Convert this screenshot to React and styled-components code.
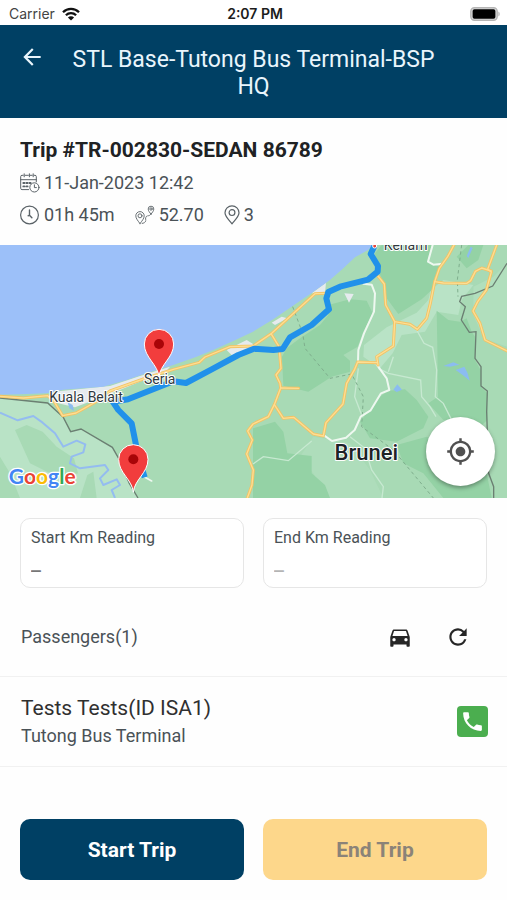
import React from 'react';
import styled, { createGlobalStyle, css } from 'styled-components';
import {
  MdArrowBack,
  MdDirectionsCar,
  MdMyLocation,
  MdPhone,
  MdRefresh,
} from 'react-icons/md';

const GlobalStyle = createGlobalStyle`
  * {
    box-sizing: border-box;
  }

  body {
    margin: 0;
    background: #fefefe;
    color: #4a5257;
    font-family: Roboto, 'Liberation Sans', sans-serif;
    font-size: 18px;
  }

  h1, h2, h3, p, ul {
    margin: 0;
    padding: 0;
    font-weight: 400;
  }

  button, input {
    font-family: inherit;
  }
`;

const Screen = styled.div`
  min-height: 100vh;
  display: flex;
  flex-direction: column;
`;

const StatusBar = styled.div`
  height: 25px;
  padding: 2px 6px 0 9px;
  display: grid;
  grid-template-columns: 1fr auto 1fr;
  align-items: center;
  background: #fff;
  color: #1c1c1c;
  font-family: Inter, sans-serif;
  font-size: 14px;
  line-height: 20px;

  svg {
    display: block;
  }
`;

const Carrier = styled.div`
  display: flex;
  align-items: center;
  gap: 7px;
  color: #444;
`;

const Clock = styled.div`
  font-weight: 600;
`;

const Battery = styled.div`
  justify-self: end;
`;

const Header = styled.header`
  display: grid;
  grid-template-columns: 36px 1fr 36px;
  padding: 21px 18px 18px;
  background: #004064;
  color: #e9f5fc;
`;

const Title = styled.h1`
  font-size: 23px;
  line-height: 27px;
  text-align: center;
`;

const IconButton = styled.button`
  display: flex;
  align-items: center;
  justify-content: center;
  width: 28px;
  height: 28px;
  padding: 0;
  border: 0;
  background: none;
  color: ${props => props.color || 'inherit'};
  font-size: 26px;
  cursor: pointer;
`;

const BackButton = styled(IconButton)`
  height: 22px;
`;

const TripInfo = styled.section`
  display: flex;
  flex-direction: column;
  gap: 8px;
  padding: 20px 20px 18px;
`;

const TripTitle = styled.h2`
  color: #202224;
  font-size: 21px;
  font-weight: 700;
  line-height: 25px;
`;

const TripMeta = styled.div`
  display: flex;
  gap: 20px;
`;

const MetaItem = styled.span`
  display: flex;
  align-items: center;
  gap: 4px;
  line-height: 24px;

  svg {
    fill: none;
    stroke: #5a6267;
    stroke-linecap: round;
    stroke-linejoin: round;
  }
`;

const MapFrame = styled.section`
  position: relative;
  aspect-ratio: 507 / 253;
  overflow: hidden;
`;

const MapCanvas = styled.svg`
  display: block;
  width: 100%;
  height: 100%;
`;

const LocateButton = styled.button`
  position: absolute;
  right: 12px;
  bottom: 12px;
  display: flex;
  align-items: center;
  justify-content: center;
  width: 69px;
  height: 69px;
  padding: 0;
  border: 0;
  border-radius: 50%;
  background: #fff;
  box-shadow: 0 2px 4px rgba(0, 0, 0, 0.35);
  color: #505050;
  font-size: 29px;
  cursor: pointer;
`;

const pair = css`
  display: grid;
  grid-template-columns: 1fr 1fr;
  gap: 19px;
`;

const Readings = styled.section`
  ${pair};
  padding: 20px 20px 0;
`;

const ReadingCard = styled.label`
  display: flex;
  flex-direction: column;
  justify-content: space-between;
  height: 70px;
  padding: 9px 10px 12px;
  border: 1px solid #e6e6e6;
  border-radius: 10px;
  background: #fff;
  font-size: 16px;
  line-height: 20px;
`;

const ReadingInput = styled.input`
  width: 100%;
  height: 24px;
  padding: 0;
  border: 0;
  outline: 0;
  background: none;
  color: #4a5257;
  font-size: 22px;
  line-height: 24px;

  &::placeholder {
    color: ${props => (props.disabled ? '#b4b4b4' : '#777')};
    opacity: 1;
  }
`;

const ListHeader = styled.div`
  display: flex;
  align-items: center;
  justify-content: space-between;
  margin-top: 10px;
  padding: 25px 35px 25px 21px;
  border-bottom: 1px solid #f1f1f1;
`;

const ListTitle = styled.h2`
  font-size: 18px;
  line-height: 28px;
`;

const ListActions = styled.div`
  display: flex;
  gap: 30px;
`;

const PassengerList = styled.ul`
  list-style: none;
`;

const PassengerRow = styled.li`
  display: flex;
  align-items: center;
  justify-content: space-between;
  min-height: 90px;
  padding: 0 19px 0 21px;
  border-bottom: 1px solid #f1f1f1;
`;

const PassengerName = styled.h3`
  color: #303030;
  font-size: 21px;
  line-height: 28px;
`;

const PassengerStop = styled.p`
  font-size: 18px;
  line-height: 28px;
`;

const CallLink = styled.a`
  display: flex;
  align-items: center;
  justify-content: center;
  width: 31px;
  height: 31px;
  border-radius: 4px;
  background: #4bae4f;
  color: #fff;
  font-size: 25px;
`;

const Footer = styled.footer`
  ${pair};
  margin-top: auto;
  padding: 20px;
`;

const TripButton = styled.button`
  height: 61px;
  padding: 0;
  border: 0;
  border-radius: 10px;
  background: ${props => (props.disabled ? '#fdd78b' : '#004064')};
  color: ${props => (props.disabled ? '#8b8378' : '#fff')};
  font-size: 21px;
  font-weight: 700;
`;

const WifiIcon = () => (
  <svg width="18" height="14" viewBox="0 0 18 14" fill="none" stroke="#111" strokeWidth="2.3">
    <path d="M1 5.2a11.4 11.4 0 0 1 16 0" />
    <path d="M3.9 8.3a7.2 7.2 0 0 1 10.2 0" />
    <path d="M9 13.6 5.9 10.6a4.4 4.4 0 0 1 6.2 0z" fill="#111" stroke="none" />
  </svg>
);

const BatteryIcon = () => (
  <svg width="31" height="14" viewBox="0 0 31 14">
    <rect x="0.8" y="0.8" width="26.4" height="12.4" rx="3.6" fill="#ddd" stroke="#b5b5b5" strokeWidth="1.4" />
    <rect x="2.6" y="2.2" width="22.8" height="9.6" rx="1.8" fill="#000" />
    <path d="M28.4 4.6a2.8 2.8 0 0 1 0 4.8z" fill="#b5b5b5" />
  </svg>
);

const CalendarIcon = () => (
  <svg width="20" height="20" viewBox="0 0 20 20">
    <path d="M8.6 16.6H2A1.3 1.3 0 0 1 .7 15.3V3.6A1.3 1.3 0 0 1 2 2.3h1.2M5.2 2.3h3.2M10.4 2.3h1.8M14.2 2.3h.8a1.3 1.3 0 0 1 1.3 1.3v5.2M.7 6.7h15.6M4.2.8v3M9.4.8v3M13.2.8v3" />
    <path d="M3.3 10h1.2M6.4 10h1.2M9.5 10h1.2M3.3 13.4h1.2M6.4 13.4h1.2" strokeWidth="1.8" />
    <circle cx="14.4" cy="14.4" r="4.6" />
    <path d="M14.4 11.8v2.8h2" />
  </svg>
);

const TimeIcon = () => (
  <svg width="20" height="20" viewBox="0 0 20 20">
    <circle cx="9.5" cy="10" r="8.9" strokeWidth="1.2" />
    <path d="M9.5 5v5.2l2.4 2.6M9.5 10.2l-1.4.6" strokeWidth="1.4" />
  </svg>
);

const RouteIcon = () => (
  <svg width="20" height="20" viewBox="0 0 20 20" strokeWidth="0.9">
    <path d="M5 18.6C3 15.8.8 13.6.8 10.8a4.2 4.2 0 0 1 8.4 0c0 2.8-2.2 5-4.2 7.8z" />
    <circle cx="5" cy="10.8" r="2" />
    <path d="M16 9.2c-1.3-1.9-2.8-3.3-2.8-5.2a2.8 2.8 0 0 1 5.6 0c0 1.9-1.5 3.3-2.8 5.2z" />
    <circle cx="16" cy="4" r="1.2" />
    <path d="M7.2 18.4c2.4-.4 3.8-1.6 3.5-3.6-.3-2.2.2-3.6 1.7-3.9 1.4-.2 2.3-.4 3-1.2" strokeDasharray="1.6 1" />
  </svg>
);

const StopIcon = () => (
  <svg width="16" height="20" viewBox="0 0 16 20" strokeWidth="1.2">
    <path d="M8 18.8C4.8 14.8 1 11.6 1 7.8a7 7 0 0 1 14 0c0 3.8-3.8 7-7 11z" />
    <circle cx="8" cy="7.6" r="2.9" />
  </svg>
);

const MapPin = ({ x, y }) => (
  <g transform={`translate(${x} ${y})`}>
    <path
      d="M0 0C-3-38-44-58-44-99a44 44 0 0 1 88 0C44-58 3-38 0 0z"
      fill="#f23d3d"
      stroke="#fff"
      strokeWidth="3"
    />
    <circle cy="-99" r="15" fill="#a90508" />
  </g>
);

const MAJOR_ROADS = [
  'M0 469 70 474 143 467 162 484 188 527 228 519 290 484 330 453 430 417 520 388 598 367 615 351 690 320 759 318 815 280 945 161 975 160',
  'M1362 15 1343 50 1318 85 1304 125 1291 190 1280 235 1252 268 1230 253 1184 245 1157 195 1153 132 1134 108',
  'M1304 125 1330 129 1400 130 1412 122 1426 94 1445 84 1474 93',
  'M1490 15 1463 88 1474 96 1459 150 1433 185 1419 213 1440 250 1455 300 1521 333',
  'M1184 245 1180 318 1130 350 1134 375',
  'M1130 368 1073 366 1064 388 1040 430 1029 492 978 548 970 588 940 582 881 532 850 535 823 494 842 444 840 430 828 405 843 385 837 320 815 284',
  'M842 444 896 445',
  'M823 494 805 530 759 552 743 573 757 600 740 642 760 690 756 735 742 774',
];

const MINOR_ROADS = [
  'M1090 131 1115 134 1125 160 1122 215 1092 280 1075 330 1074 366',
  'M1132 376 1160 415 1168 450 1143 460 1112 511 1082 530 1064 570 1038 593 996 603 972 586',
  'M1298 15 1284 65 1300 74 1328 71',
];

const RoadMap = () => (
  <MapCanvas viewBox="0 15 1521 759" preserveAspectRatio="xMidYMid slice" role="img" aria-label="Trip route">
    <rect y="15" width="1521" height="759" fill="#a8dab5" />
    {/* lowlands */}
    <g fill="#b9e3c6">
      <path d="M0 474 143 488 190 535 212 575 243 567 337 622 352 650 390 730 414 774H0z" />
      <path d="M1092 315 1160 262 1250 218 1285 180 1292 150 1330 120 1420 135 1385 180 1375 225 1310 215 1275 275 1205 285 1178 340 1140 385 1090 350z" />
      <path d="M1420 140 1480 110 1521 70V320L1452 296 1420 225z" opacity="0.5" />
      <path d="M940 590 1000 600 1050 610 1110 690 1150 774H980L940 700 900 650z" opacity="0.35" />
    </g>
    {/* forest */}
    <g fill="#94d2a5">
      <path d="M860 325 900 295 960 255 985 225 985 195 1050 178 1100 182 1118 220 1090 275 1073 320 1030 345 1050 362 1050 395 995 410 925 455 850 437 846 350z" />
      <path d="M1145 15H1295L1282 62 1318 80 1295 150 1265 178 1195 222 1160 175 1153 130 1130 85 1125 40z" />
      <path d="M1310 212 1345 240 1380 245 1400 235 1415 275 1425 290 1425 360 1443 392 1443 440 1462 460 1462 540 1440 560 1400 535 1330 540 1285 490 1314 470 1312 320z" />
      <path d="M1080 545 1140 470 1165 452 1215 448 1250 480 1285 530 1270 565 1190 605 1110 595z" />
      <path d="M759 565 825 545 850 575 862 640 935 648 935 700 975 735 990 774H759z" />
      <path d="M1190 615 1280 590 1360 640 1460 700 1475 774H1330L1270 700 1210 670z" />
      <path d="M1405 15H1450L1435 60 1400 85 1370 50z" />
    </g>
    <path d="M45 570 80 555 128 575 170 620 222 655 234 700 180 715 90 670z M262 705 280 695 290 774H240z M0 650 30 700 60 774H0z" fill="#a8dab5" />
    {/* towns */}
    <g fill="#e6ebee">
      <path d="M160 455 330 438 420 408 510 380 500 392 330 462 225 502 175 490z" />
      <path d="M680 330 740 300 759 312V325L700 350z" />
      <path d="M815 248 845 230 862 235 825 255z M935 160 978 128 975 158z M1033 160 1061 162 1047 188z" />
    </g>
    <path
      d="M0 15H1119L1104 30 1065 52 1030 85 990 120 934 160 879 197 820 238 759 275 700 303 645 328 590 350 520 375 430 403 380 420 310 440 190 449 140 460 60 463 0 464z"
      fill="#9cc0f9"
    />
    {/* rivers and lakes */}
    <g fill="none" stroke="#94bcf0" strokeWidth="6" strokeLinejoin="round">
      <path d="M0 518 53 541 100 528 128 548 165 580 190 620 230 602 256 613 250 637 215 650 210 670 240 685 315 675 325 690 300 715 310 735 350 718 360 735 335 750 345 774" />
    </g>
    <g fill="#8bbcf0">
      <path d="M203 487 218 495 222 512 208 505z" />
      <path d="M1180 449 1192 433 1206 449 1190 456z M1330 378 1360 367 1378 374 1350 380z M1367 390 1393 380 1403 400 1409 422 1388 405z M1400 48 1412 20 1418 24 1405 54z" />
    </g>
    <g fill="none" stroke="#c7e9d1" strokeWidth="4">
      <path d="M1250 270 1272 310 1298 322 1310 390 1306 470 1330 490 1355 540" />
      <path d="M1135 385 1165 400 1262 420 1265 470 1290 500 1308 530" />
      <path d="M1075 385 1064 470 1085 525M1050 590 1095 625 1115 690 1150 740 1146 774M759 672 790 650 865 662 935 603M1180 350 1165 395" />
    </g>
    {/* borders */}
    <g fill="none" stroke="#6b7f72" strokeWidth="4">
      <path d="M0 474 143 489 190 532 212 575 243 567 337 622 356 655 388 730 414 774" />
      <path d="M1521 70 1478 138 1425 160 1385 169 1379 185 1396 200 1384 240 1408 277 1428 275 1425 355 1443 380 1443 438 1462 453 1460 515 1466 700 1481 740V774" />
    </g>
    <g fill="none" stroke="#7fae8d" strokeWidth="3" strokeDasharray="10 9">
      <path d="M878 200 908 280 915 325 990 415 1055 402 1090 470 1085 560 1180 630 1300 774M1385 15 1372 120 1374 170" />
    </g>
    <g fill="none" strokeLinejoin="round" strokeLinecap="round">
      {MINOR_ROADS.map(d => (
        <path key={d} d={d} stroke="#eef8f0" strokeWidth="6" />
      ))}
      {MAJOR_ROADS.map(d => (
        <path key={d} d={d} stroke="#f3c263" strokeWidth="9" />
      ))}
      {MAJOR_ROADS.map(d => (
        <path key={d} d={d} stroke="#fdde93" strokeWidth="4" />
      ))}
      <path d="M405 695 455 723" stroke="#eef8f0" strokeWidth="5" />
    </g>
    {/* driven route */}
    <g fill="none" stroke="#2191ea" strokeWidth="18" strokeLinejoin="round">
      <path d="M1123 18 1112 42 1134 78 1133 95 1104 119 1020 140 985 156 979 175 987 208 935 255 870 292 848 327 820 330 762 326 715 345 635 388 558 429 520 424 384 478 338 485 355 510 395 550 415 650 434 712" />
    </g>
    <g
      fill="#30383d"
      stroke="#fff"
      strokeWidth="6"
      strokeLinejoin="round"
      paintOrder="stroke"
      fontSize="42"
      textAnchor="middle"
    >
      <text x="258" y="485">Kuala Belait</text>
      <text x="479" y="431">Seria</text>
      <text x="1217" y="29">Kenam</text>
      <text x="1099" y="659" fontSize="66" fontWeight="500" fill="#1d2226">Brunei</text>
    </g>
    <circle cx="1124" cy="18" r="6" fill="#e8453c" stroke="#fff" strokeWidth="3" />
    <MapPin x={477} y={411} />
    <MapPin x={400} y={757} />
    <text
      x="26"
      y="731"
      fontFamily="Lato, sans-serif"
      fontSize="63"
      fontWeight="700"
      stroke="#fff"
      strokeWidth="8"
      strokeLinejoin="round"
      paintOrder="stroke"
    >
      <tspan fill="#4285f4">G</tspan>
      <tspan fill="#ea4335">o</tspan>
      <tspan fill="#fbbc05">o</tspan>
      <tspan fill="#4285f4">g</tspan>
      <tspan fill="#34a853">l</tspan>
      <tspan fill="#ea4335">e</tspan>
    </text>
  </MapCanvas>
);

const passengers = [{ name: 'Tests Tests(ID ISA1)', stop: 'Tutong Bus Terminal' }];

const App = () => {
  return (
    <Screen>
      <GlobalStyle />
      <StatusBar>
        <Carrier>
          Carrier
          <WifiIcon />
        </Carrier>
        <Clock>2:07 PM</Clock>
        <Battery>
          <BatteryIcon />
        </Battery>
      </StatusBar>

      <Header>
        <BackButton aria-label="Back">
          <MdArrowBack />
        </BackButton>
        <Title>STL Base-Tutong Bus Terminal-BSP HQ</Title>
      </Header>

      <TripInfo>
        <TripTitle>Trip #TR-002830-SEDAN 86789</TripTitle>
        <TripMeta>
          <MetaItem>
            <CalendarIcon />
            11-Jan-2023 12:42
          </MetaItem>
        </TripMeta>
        <TripMeta>
          <MetaItem>
            <TimeIcon />
            01h 45m
          </MetaItem>
          <MetaItem>
            <RouteIcon />
            52.70
          </MetaItem>
          <MetaItem>
            <StopIcon />3
          </MetaItem>
        </TripMeta>
      </TripInfo>

      <MapFrame>
        <RoadMap />
        <LocateButton aria-label="My location">
          <MdMyLocation />
        </LocateButton>
      </MapFrame>

      <Readings>
        <ReadingCard>
          Start Km Reading
          <ReadingInput placeholder="_" inputMode="numeric" />
        </ReadingCard>
        <ReadingCard>
          End Km Reading
          <ReadingInput placeholder="_" inputMode="numeric" disabled />
        </ReadingCard>
      </Readings>

      <ListHeader>
        <ListTitle>Passengers({passengers.length})</ListTitle>
        <ListActions>
          <IconButton aria-label="Vehicle" color="#262626">
            <MdDirectionsCar />
          </IconButton>
          <IconButton aria-label="Refresh" color="#262626">
            <MdRefresh />
          </IconButton>
        </ListActions>
      </ListHeader>

      <PassengerList>
        {passengers.map(({ name, stop }) => (
          <PassengerRow key={name}>
            <div>
              <PassengerName>{name}</PassengerName>
              <PassengerStop>{stop}</PassengerStop>
            </div>
            <CallLink href="tel:" aria-label={`Call ${name}`}>
              <MdPhone />
            </CallLink>
          </PassengerRow>
        ))}
      </PassengerList>

      <Footer>
        <TripButton>Start Trip</TripButton>
        <TripButton disabled>End Trip</TripButton>
      </Footer>
    </Screen>
  );
};

export default App;
